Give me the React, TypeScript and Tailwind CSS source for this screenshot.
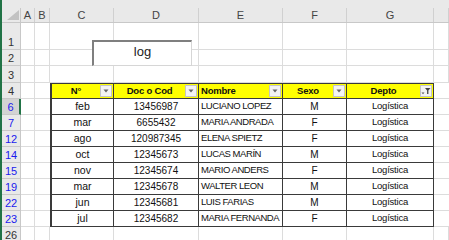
import React from 'react';

const cols = ['w-[14px]', 'w-[15px]', 'w-[64px]', 'w-[85px]', 'w-[84px]', 'w-[64px]', 'w-[87px]', 'flex-1'];
const letters = ['A', 'B', 'C', 'D', 'E', 'F', 'G', ''];

const data = [
  ['6', 'feb', '13456987', 'LUCIANO LOPEZ', 'M'],
  ['7', 'mar', '6655432', 'MARIA ANDRADA', 'F'],
  ['12', 'ago', '120987345', 'ELENA SPIETZ', 'F'],
  ['14', 'oct', '12345673', 'LUCAS MARÍN', 'M'],
  ['15', 'nov', '12345674', 'MARIO ANDERS', 'F'],
  ['19', 'mar', '12345678', 'WALTER LEON', 'M'],
  ['22', 'jun', '12345681', 'LUIS FARIAS', 'M'],
  ['23', 'jul', '12345682', 'MARIA FERNANDA', 'F'],
];

function FilterButton({ active }: { active?: boolean }) {
  return (
    <span className="w-[12px] h-[12px] mr-[1px] border border-[#c4c4c4] bg-[#f3f3f3] flex items-center justify-center shrink-0">
      {active ? (
        <svg width="10" height="8" viewBox="0 0 10 8">
          <path d="M0.5 5.5h3l-1.5 1.8z" fill="#555" />
          <path d="M4 1h5.5l-2.1 2.4v3.6h-1.3v-3.6z" fill="#444" />
        </svg>
      ) : (
        <svg width="6" height="4" viewBox="0 0 6 4">
          <path d="M0.5 0.5h5l-2.5 3z" fill="#666" />
        </svg>
      )}
    </span>
  );
}

function RowHead({ label, blue, active }: { label: string; blue?: boolean; active?: boolean }) {
  return (
    <div
      className={`w-[19px] shrink-0 flex items-end justify-center pb-[1px] text-[11px] leading-none border-b border-[#c8c8c8] ${
        active ? 'bg-[#d3d3d3] border-r-2 border-r-[#217346]' : 'bg-[#e9e9e9] border-r border-r-[#c8c8c8]'
      } ${blue ? 'text-[#1a1aee]' : 'text-[#333]'}`}
    >
      {label}
    </div>
  );
}

function EmptyRow({ label, h }: { label: string; h: string }) {
  return (
    <div className={`flex ${h}`}>
      <RowHead label={label} />
      {cols.map((c, i) => (
        <div key={i} className={`${c} shrink-0 border-r border-b border-[#dcdcdc]`} />
      ))}
    </div>
  );
}

export default function App() {
  return (
    <div
      className="relative w-[449px] h-[240px] overflow-hidden bg-white border-l-2 border-[#217346]"
      style={{ fontFamily: '"Liberation Sans", Arial, sans-serif' }}
    >
      {/* strip + column headers */}
      <div className="h-[8px] bg-[#e9e9e9]" />
      <div className="flex h-[15px] bg-[#e9e9e9] border-b border-[#c8c8c8] text-[11px] text-[#444]">
        <div className="w-[19px] shrink-0 border-r border-[#c8c8c8] flex items-end justify-end pr-[1px] pb-[2px]">
          <svg width="12" height="10" viewBox="0 0 12 10">
            <path d="M12 0v10H0z" fill="#c2c2c2" />
          </svg>
        </div>
        {cols.map((c, i) => (
          <div key={i} className={`${c} shrink-0 border-r border-[#d0d0d0] flex items-center justify-center`}>
            {letters[i]}
          </div>
        ))}
      </div>

      <EmptyRow label="1" h="h-[27px]" />
      <EmptyRow label="2" h="h-[16px]" />
      <EmptyRow label="3" h="h-[17px]" />

      {/* table header */}
      <div className="flex h-[16px]">
        <RowHead label="4" />
        <div className="w-[14px] shrink-0 border-r border-b border-[#dcdcdc]" />
        <div className="w-[15px] shrink-0 border-b border-[#dcdcdc]" />
        {[
          ['w-[64px] border-l-2', 'N°', false],
          ['w-[85px]', 'Doc o Cod', false],
          ['w-[84px]', 'Nombre', false],
          ['w-[64px]', 'Sexo', false],
          ['w-[87px]', 'Depto', true],
        ].map(([w, t, act], i) => (
          <div
            key={i}
            className={`${w} shrink-0 bg-[#ffff00] border-t border-r border-b border-[#3a3a3a] flex items-center text-[9.5px] tracking-[-0.2px] font-bold text-[#111]`}
          >
            <span className={`flex-1 ${i === 2 ? 'text-left pl-[2px]' : 'text-center'}`}>{t as string}</span>
            <FilterButton active={act as boolean} />
          </div>
        ))}
        <div className="flex-1 border-b border-[#dcdcdc]" />
      </div>

      {data.map((r, idx) => (
        <div key={r[0]} className="flex h-[16px] text-[#111]">
          <RowHead label={r[0]} blue active={idx === 0} />
          <div className="w-[14px] shrink-0 border-r border-b border-[#dcdcdc]" />
          <div className="w-[15px] shrink-0 border-b border-[#dcdcdc]" />
          <div className="w-[64px] shrink-0 border-l-2 border-r border-b border-[#3a3a3a] flex items-center justify-center text-[10.5px]">
            {r[1]}
          </div>
          <div className="w-[85px] shrink-0 border-r border-b border-[#3a3a3a] flex items-center justify-center text-[10px]">
            {r[2]}
          </div>
          <div className="w-[84px] shrink-0 border-r border-b border-[#3a3a3a] flex items-center pl-[2px] text-[9.5px] tracking-[-0.45px] whitespace-nowrap overflow-hidden">
            {r[3]}
          </div>
          <div className="w-[64px] shrink-0 border-r border-b border-[#3a3a3a] flex items-center justify-center text-[10px]">
            {r[4]}
          </div>
          <div className="w-[87px] shrink-0 border-r border-b border-[#3a3a3a] flex items-center justify-center text-[9.5px] tracking-[-0.2px]">
            Logística
          </div>
          <div className="flex-1 border-b border-[#dcdcdc]" />
        </div>
      ))}

      <EmptyRow label="26" h="h-[16px]" />

      {/* text box shape */}
      <div className="absolute left-[90px] top-[40px] w-[100px] h-[26px] bg-white border-t-2 border-l-2 border-[#7f7f7f] border-r border-b border-r-[#d6d6d6] border-b-[#d6d6d6] flex justify-center pt-[3px] text-[13px] leading-none text-[#222]">
        log
      </div>
    </div>
  );
}
